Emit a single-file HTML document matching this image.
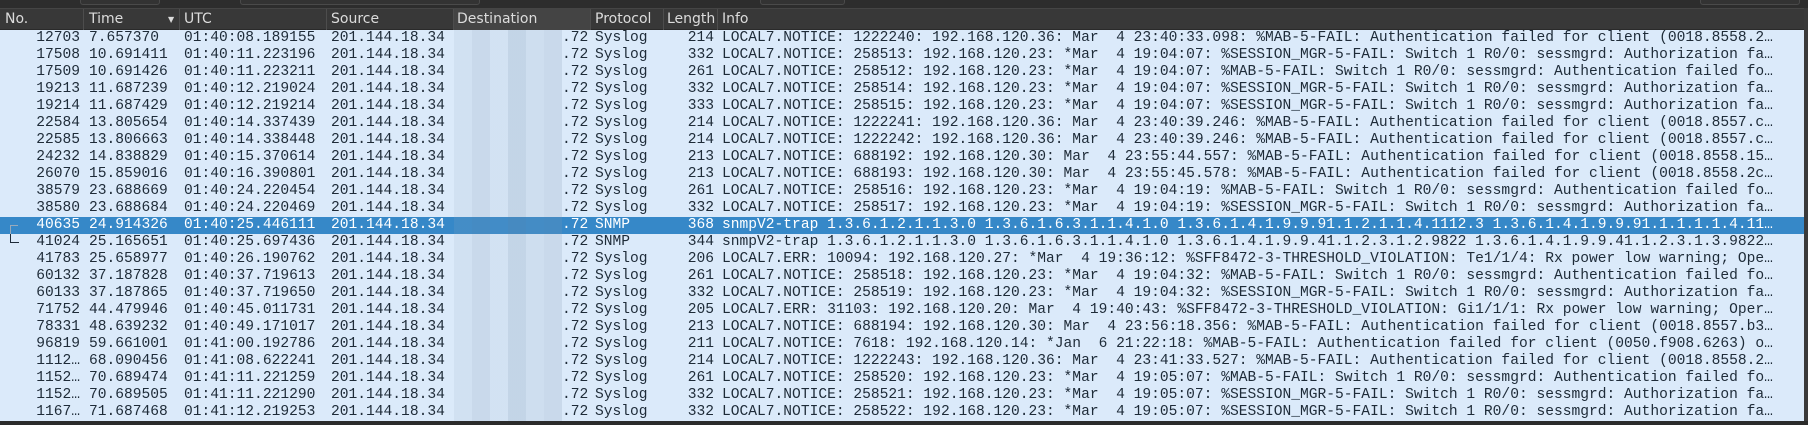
<!DOCTYPE html>
<html><head><meta charset="utf-8"><style>
*{margin:0;padding:0;box-sizing:border-box}
html,body{width:1808px;height:425px;overflow:hidden;background:#2f2f2f}
.top{position:absolute;left:0;top:0;width:1808px;height:8px;background:#2d2d2d}
.btn{position:absolute;top:-4px;height:9px;border:1px solid #4a4a4a;border-radius:3px;background:#333}
.hdr{position:absolute;left:0;top:8px;width:1808px;height:22px;background:#383838;border-top:1px solid #454545;border-bottom:1px solid #2a2a2a;font-family:"DejaVu Sans","Liberation Sans",sans-serif;font-size:14px;color:#dcdcdc}
.hdr span{position:absolute;top:2px}
.hdr i{position:absolute;top:0;width:1px;height:21px;background:#4d4d4d}
.list{position:absolute;left:0;top:30px;width:1804px;height:391px;background:#dbeafa;font-family:"Liberation Mono",monospace;font-size:14.6px;color:#1e2b38}
.r{position:absolute;left:0;width:1804px;height:17px;line-height:17px;white-space:pre}
.r span{position:absolute;top:0}
.sel{background:#3688c8;color:#fff}
.no{right:1724px;text-align:right}
.ln{right:1090px;text-align:right}
.blur{position:absolute;left:454px;top:30px;width:108px;height:391px;
background:linear-gradient(90deg,rgba(150,170,190,.14) 0 18px,rgba(130,150,175,.2) 18px 36px,rgba(150,170,190,.12) 36px 54px,rgba(120,145,170,.24) 54px 72px,rgba(140,160,180,.16) 72px 90px,rgba(130,150,175,.2) 90px 108px)}
.edge{position:absolute;left:1804px;top:8px;width:4px;height:417px;background:#3a3a3a}
.bot{position:absolute;left:0;top:421px;width:1808px;height:4px;background:#2b2b2b}
</style></head><body>
<div class="top"><div class="btn" style="left:80px;width:80px"></div><div class="btn" style="left:240px;width:240px"></div><div class="btn" style="left:760px;width:85px"></div><div class="btn" style="left:1700px;width:100px"></div></div>
<div class="hdr">
<span style="left:5px">No.</span><i style="left:83px"></i>
<span style="left:89px">Time</span><span style="left:168px;font-size:8px;top:6px">▼</span><i style="left:179px"></i>
<span style="left:184px">UTC</span><i style="left:326px"></i>
<span style="left:331px">Source</span><i style="left:453px"></i>
<div style="position:absolute;left:454px;top:0;width:136px;height:21px;background:#444"></div>
<span style="left:457px">Destination</span><i style="left:590px"></i>
<span style="left:595px">Protocol</span><i style="left:663px"></i>
<span style="left:667px">Length</span><i style="left:717px"></i>
<span style="left:722px">Info</span>
</div>
<div class="list">
<div class="r" style="top:0"><span class="no">12703</span><span style="left:89px">7.657370</span><span style="left:184px">01:40:08.189155</span><span style="left:331px">201.144.18.34</span><span style="left:562px">.72</span><span style="left:595px">Syslog</span><span class="ln">214</span><span style="left:722px">LOCAL7.NOTICE: 1222240: 192.168.120.36: Mar  4 23:40:33.098: %MAB-5-FAIL: Authentication failed for client (0018.8558.2…</span></div>
<div class="r" style="top:17px"><span class="no">17508</span><span style="left:89px">10.691411</span><span style="left:184px">01:40:11.223196</span><span style="left:331px">201.144.18.34</span><span style="left:562px">.72</span><span style="left:595px">Syslog</span><span class="ln">332</span><span style="left:722px">LOCAL7.NOTICE: 258513: 192.168.120.23: *Mar  4 19:04:07: %SESSION_MGR-5-FAIL: Switch 1 R0/0: sessmgrd: Authorization fa…</span></div>
<div class="r" style="top:34px"><span class="no">17509</span><span style="left:89px">10.691426</span><span style="left:184px">01:40:11.223211</span><span style="left:331px">201.144.18.34</span><span style="left:562px">.72</span><span style="left:595px">Syslog</span><span class="ln">261</span><span style="left:722px">LOCAL7.NOTICE: 258512: 192.168.120.23: *Mar  4 19:04:07: %MAB-5-FAIL: Switch 1 R0/0: sessmgrd: Authentication failed fo…</span></div>
<div class="r" style="top:51px"><span class="no">19213</span><span style="left:89px">11.687239</span><span style="left:184px">01:40:12.219024</span><span style="left:331px">201.144.18.34</span><span style="left:562px">.72</span><span style="left:595px">Syslog</span><span class="ln">332</span><span style="left:722px">LOCAL7.NOTICE: 258514: 192.168.120.23: *Mar  4 19:04:07: %SESSION_MGR-5-FAIL: Switch 1 R0/0: sessmgrd: Authorization fa…</span></div>
<div class="r" style="top:68px"><span class="no">19214</span><span style="left:89px">11.687429</span><span style="left:184px">01:40:12.219214</span><span style="left:331px">201.144.18.34</span><span style="left:562px">.72</span><span style="left:595px">Syslog</span><span class="ln">333</span><span style="left:722px">LOCAL7.NOTICE: 258515: 192.168.120.23: *Mar  4 19:04:07: %SESSION_MGR-5-FAIL: Switch 1 R0/0: sessmgrd: Authorization fa…</span></div>
<div class="r" style="top:85px"><span class="no">22584</span><span style="left:89px">13.805654</span><span style="left:184px">01:40:14.337439</span><span style="left:331px">201.144.18.34</span><span style="left:562px">.72</span><span style="left:595px">Syslog</span><span class="ln">214</span><span style="left:722px">LOCAL7.NOTICE: 1222241: 192.168.120.36: Mar  4 23:40:39.246: %MAB-5-FAIL: Authentication failed for client (0018.8557.c…</span></div>
<div class="r" style="top:102px"><span class="no">22585</span><span style="left:89px">13.806663</span><span style="left:184px">01:40:14.338448</span><span style="left:331px">201.144.18.34</span><span style="left:562px">.72</span><span style="left:595px">Syslog</span><span class="ln">214</span><span style="left:722px">LOCAL7.NOTICE: 1222242: 192.168.120.36: Mar  4 23:40:39.246: %MAB-5-FAIL: Authentication failed for client (0018.8557.c…</span></div>
<div class="r" style="top:119px"><span class="no">24232</span><span style="left:89px">14.838829</span><span style="left:184px">01:40:15.370614</span><span style="left:331px">201.144.18.34</span><span style="left:562px">.72</span><span style="left:595px">Syslog</span><span class="ln">213</span><span style="left:722px">LOCAL7.NOTICE: 688192: 192.168.120.30: Mar  4 23:55:44.557: %MAB-5-FAIL: Authentication failed for client (0018.8558.15…</span></div>
<div class="r" style="top:136px"><span class="no">26070</span><span style="left:89px">15.859016</span><span style="left:184px">01:40:16.390801</span><span style="left:331px">201.144.18.34</span><span style="left:562px">.72</span><span style="left:595px">Syslog</span><span class="ln">213</span><span style="left:722px">LOCAL7.NOTICE: 688193: 192.168.120.30: Mar  4 23:55:45.578: %MAB-5-FAIL: Authentication failed for client (0018.8558.2c…</span></div>
<div class="r" style="top:153px"><span class="no">38579</span><span style="left:89px">23.688669</span><span style="left:184px">01:40:24.220454</span><span style="left:331px">201.144.18.34</span><span style="left:562px">.72</span><span style="left:595px">Syslog</span><span class="ln">261</span><span style="left:722px">LOCAL7.NOTICE: 258516: 192.168.120.23: *Mar  4 19:04:19: %MAB-5-FAIL: Switch 1 R0/0: sessmgrd: Authentication failed fo…</span></div>
<div class="r" style="top:170px"><span class="no">38580</span><span style="left:89px">23.688684</span><span style="left:184px">01:40:24.220469</span><span style="left:331px">201.144.18.34</span><span style="left:562px">.72</span><span style="left:595px">Syslog</span><span class="ln">332</span><span style="left:722px">LOCAL7.NOTICE: 258517: 192.168.120.23: *Mar  4 19:04:19: %SESSION_MGR-5-FAIL: Switch 1 R0/0: sessmgrd: Authorization fa…</span></div>
<div class="r sel" style="top:187px"><span class="no">40635</span><span style="left:89px">24.914326</span><span style="left:184px">01:40:25.446111</span><span style="left:331px">201.144.18.34</span><span style="left:562px">.72</span><span style="left:595px">SNMP</span><span class="ln">368</span><span style="left:722px">snmpV2-trap 1.3.6.1.2.1.1.3.0 1.3.6.1.6.3.1.1.4.1.0 1.3.6.1.4.1.9.9.91.1.2.1.1.4.1112.3 1.3.6.1.4.1.9.9.91.1.1.1.1.4.11…</span><div style="position:absolute;left:10px;top:8px;width:8px;height:9px;border-left:1px solid #9ab;border-top:1px solid #9ab"></div></div>
<div class="r" style="top:204px"><span class="no">41024</span><span style="left:89px">25.165651</span><span style="left:184px">01:40:25.697436</span><span style="left:331px">201.144.18.34</span><span style="left:562px">.72</span><span style="left:595px">SNMP</span><span class="ln">344</span><span style="left:722px">snmpV2-trap 1.3.6.1.2.1.1.3.0 1.3.6.1.6.3.1.1.4.1.0 1.3.6.1.4.1.9.9.41.1.2.3.1.2.9822 1.3.6.1.4.1.9.9.41.1.2.3.1.3.9822…</span><div style="position:absolute;left:10px;top:0;width:9px;height:9px;border-left:1px solid #1e2b38;border-bottom:1px solid #1e2b38"></div></div>
<div class="r" style="top:221px"><span class="no">41783</span><span style="left:89px">25.658977</span><span style="left:184px">01:40:26.190762</span><span style="left:331px">201.144.18.34</span><span style="left:562px">.72</span><span style="left:595px">Syslog</span><span class="ln">206</span><span style="left:722px">LOCAL7.ERR: 10094: 192.168.120.27: *Mar  4 19:36:12: %SFF8472-3-THRESHOLD_VIOLATION: Te1/1/4: Rx power low warning; Ope…</span></div>
<div class="r" style="top:238px"><span class="no">60132</span><span style="left:89px">37.187828</span><span style="left:184px">01:40:37.719613</span><span style="left:331px">201.144.18.34</span><span style="left:562px">.72</span><span style="left:595px">Syslog</span><span class="ln">261</span><span style="left:722px">LOCAL7.NOTICE: 258518: 192.168.120.23: *Mar  4 19:04:32: %MAB-5-FAIL: Switch 1 R0/0: sessmgrd: Authentication failed fo…</span></div>
<div class="r" style="top:255px"><span class="no">60133</span><span style="left:89px">37.187865</span><span style="left:184px">01:40:37.719650</span><span style="left:331px">201.144.18.34</span><span style="left:562px">.72</span><span style="left:595px">Syslog</span><span class="ln">332</span><span style="left:722px">LOCAL7.NOTICE: 258519: 192.168.120.23: *Mar  4 19:04:32: %SESSION_MGR-5-FAIL: Switch 1 R0/0: sessmgrd: Authorization fa…</span></div>
<div class="r" style="top:272px"><span class="no">71752</span><span style="left:89px">44.479946</span><span style="left:184px">01:40:45.011731</span><span style="left:331px">201.144.18.34</span><span style="left:562px">.72</span><span style="left:595px">Syslog</span><span class="ln">205</span><span style="left:722px">LOCAL7.ERR: 31103: 192.168.120.20: Mar  4 19:40:43: %SFF8472-3-THRESHOLD_VIOLATION: Gi1/1/1: Rx power low warning; Oper…</span></div>
<div class="r" style="top:289px"><span class="no">78331</span><span style="left:89px">48.639232</span><span style="left:184px">01:40:49.171017</span><span style="left:331px">201.144.18.34</span><span style="left:562px">.72</span><span style="left:595px">Syslog</span><span class="ln">213</span><span style="left:722px">LOCAL7.NOTICE: 688194: 192.168.120.30: Mar  4 23:56:18.356: %MAB-5-FAIL: Authentication failed for client (0018.8557.b3…</span></div>
<div class="r" style="top:306px"><span class="no">96819</span><span style="left:89px">59.661001</span><span style="left:184px">01:41:00.192786</span><span style="left:331px">201.144.18.34</span><span style="left:562px">.72</span><span style="left:595px">Syslog</span><span class="ln">211</span><span style="left:722px">LOCAL7.NOTICE: 7618: 192.168.120.14: *Jan  6 21:22:18: %MAB-5-FAIL: Authentication failed for client (0050.f908.6263) o…</span></div>
<div class="r" style="top:323px"><span class="no">1112…</span><span style="left:89px">68.090456</span><span style="left:184px">01:41:08.622241</span><span style="left:331px">201.144.18.34</span><span style="left:562px">.72</span><span style="left:595px">Syslog</span><span class="ln">214</span><span style="left:722px">LOCAL7.NOTICE: 1222243: 192.168.120.36: Mar  4 23:41:33.527: %MAB-5-FAIL: Authentication failed for client (0018.8558.2…</span></div>
<div class="r" style="top:340px"><span class="no">1152…</span><span style="left:89px">70.689474</span><span style="left:184px">01:41:11.221259</span><span style="left:331px">201.144.18.34</span><span style="left:562px">.72</span><span style="left:595px">Syslog</span><span class="ln">261</span><span style="left:722px">LOCAL7.NOTICE: 258520: 192.168.120.23: *Mar  4 19:05:07: %MAB-5-FAIL: Switch 1 R0/0: sessmgrd: Authentication failed fo…</span></div>
<div class="r" style="top:357px"><span class="no">1152…</span><span style="left:89px">70.689505</span><span style="left:184px">01:41:11.221290</span><span style="left:331px">201.144.18.34</span><span style="left:562px">.72</span><span style="left:595px">Syslog</span><span class="ln">332</span><span style="left:722px">LOCAL7.NOTICE: 258521: 192.168.120.23: *Mar  4 19:05:07: %SESSION_MGR-5-FAIL: Switch 1 R0/0: sessmgrd: Authorization fa…</span></div>
<div class="r" style="top:374px"><span class="no">1167…</span><span style="left:89px">71.687468</span><span style="left:184px">01:41:12.219253</span><span style="left:331px">201.144.18.34</span><span style="left:562px">.72</span><span style="left:595px">Syslog</span><span class="ln">332</span><span style="left:722px">LOCAL7.NOTICE: 258522: 192.168.120.23: *Mar  4 19:05:07: %SESSION_MGR-5-FAIL: Switch 1 R0/0: sessmgrd: Authorization fa…</span></div>
</div>
<div class="blur"></div>
<div class="edge"></div>
<div class="bot"></div>
</body></html>
